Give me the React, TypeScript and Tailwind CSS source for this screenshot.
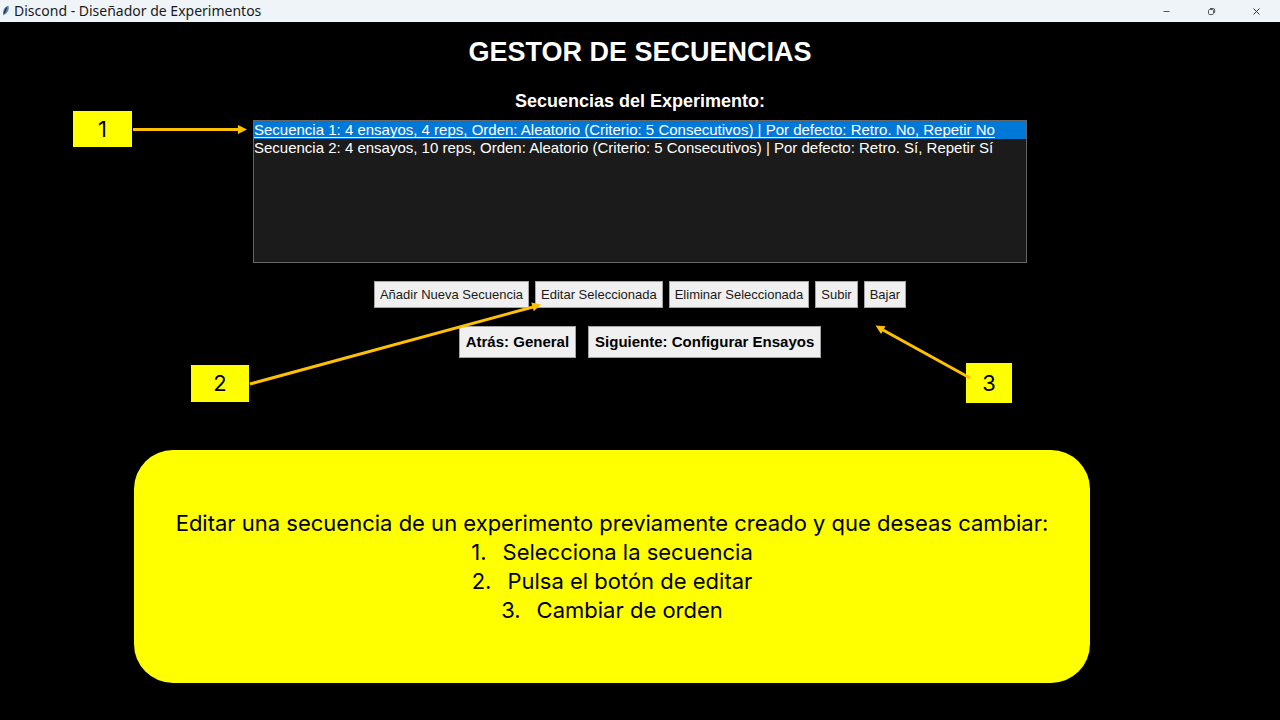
import { useState } from "react";

const sequences = [
  "Secuencia 1: 4 ensayos, 4 reps, Orden: Aleatorio (Criterio: 5 Consecutivos) | Por defecto: Retro. No, Repetir No",
  "Secuencia 2: 4 ensayos, 10 reps, Orden: Aleatorio (Criterio: 5 Consecutivos) | Por defecto: Retro. Sí, Repetir Sí",
];

const actions = [
  "Añadir Nueva Secuencia",
  "Editar Seleccionada",
  "Eliminar Seleccionada",
  "Subir",
  "Bajar",
];

const steps = ["Selecciona la secuencia", "Pulsa el botón de editar", "Cambiar de orden"];

function TitleBar() {
  return (
    <header className="flex h-[22px] items-center justify-between bg-[#eff4f9] text-[#1a1a1a]">
      <div className="flex items-center gap-1 pl-0.5">
        <svg className="h-3 w-2" viewBox="0 0 8 12" aria-hidden="true">
          <path d="M6.500.8C3.200 1.500 1 4.500 1.200 8.200L.9 10.500l1.500-1C5.500 8.500 7.500 4.800 6.500.8Z" fill="#5d86b5" />
          <path d="M4.600 2.500 2 8.500" stroke="#1c2b40" strokeWidth="1.300" fill="none" />
        </svg>
        <span className="font-['Noto_Sans',sans-serif] text-[14px] leading-[22px]">
          Discond - Diseñador de Experimentos
        </span>
      </div>
      <div className="flex h-full pr-px">
        <button type="button" aria-label="Minimizar" className="flex w-[45px] items-center justify-center">
          <svg className="h-[9px] w-[9px]" viewBox="0 0 9 9" fill="none" stroke="#555">
            <path d="M1.500 4.500h6" />
          </svg>
        </button>
        <button type="button" aria-label="Restaurar" className="flex w-[45px] items-center justify-center">
          <svg className="h-[9px] w-[9px]" viewBox="0 0 9 9" fill="none" stroke="#555">
            <rect x="1.500" y="2.500" width="5" height="5" rx="1.200" />
            <path d="M3 1.500h3.200a1.500 1.500 0 0 1 1.500 1.500v3" />
          </svg>
        </button>
        <button type="button" aria-label="Cerrar" className="flex w-[45px] items-center justify-center">
          <svg className="h-[9px] w-[9px]" viewBox="0 0 9 9" fill="none" stroke="#333">
            <path d="m1.500 1.500 6 6m0-6-6 6" />
          </svg>
        </button>
      </div>
    </header>
  );
}

function Arrows() {
  return (
    <svg
      className="pointer-events-none absolute top-0 -left-[180px] h-[400px] w-[960px]"
      viewBox="73 22 960 400"
      aria-hidden="true"
    >
      <g stroke="#ffc000" strokeWidth="3">
        <path d="M133 129.500H240" />
        <path d="M250 384 533 307" />
        <path d="M970 378 883 330" />
      </g>
      <g fill="#ffc000">
        <path d="M247 129.500 238 125v9Z" />
        <path d="M541 304.500 531.300 302.500 533.700 311.300Z" />
        <path d="M875.500 325.500 885.500 326.200 881.100 334.100Z" />
      </g>
    </svg>
  );
}

export default function App() {
  const [selected, setSelected] = useState("0");

  return (
    <div className="flex min-h-screen flex-col bg-black font-['Liberation_Sans',Arial,sans-serif]">
      <TitleBar />
      <main className="flex flex-1 flex-col items-center pb-[37px]">
        <div className="relative flex w-full max-w-[774px] flex-col items-center">
          <h1 className="pt-3 text-[27px] leading-9 font-bold text-white">GESTOR DE SECUENCIAS</h1>
          <label htmlFor="sequences" className="pt-[19px] text-[18px] leading-6 font-bold text-white">
            Secuencias del Experimento:
          </label>
          <select
            id="sequences"
            size={8}
            value={selected}
            onChange={(event) => setSelected(event.target.value)}
            className="mt-[7px] h-[143px] w-full appearance-none overflow-hidden rounded-none border border-[#666] bg-[#1b1b1b] p-0 text-[15px] text-white outline-none"
          >
            {sequences.map((text, index) => (
              <option
                key={text}
                value={String(index)}
                className="h-[18px] min-h-0 p-0 leading-[17px] underline-offset-2 [text-decoration-skip-ink:none] [-webkit-text-fill-color:#fff] checked:bg-[linear-gradient(#0078d7,#0078d7)] checked:underline"
              >
                {text}
              </option>
            ))}
          </select>
          <div className="flex flex-wrap justify-center gap-1.5 pt-[18px]">
            {actions.map((label) => (
              <button
                key={label}
                type="button"
                className="h-[27px] border border-[#a5a5a5] bg-[#f0f0f0] px-[5px] text-[13px] leading-4 text-[#1a1a1a]"
              >
                {label}
              </button>
            ))}
          </div>
          <div className="flex flex-wrap justify-center gap-3 pt-[18px]">
            {["Atrás: General", "Siguiente: Configurar Ensayos"].map((label) => (
              <button
                key={label}
                type="button"
                className="h-8 border border-[#a5a5a5] bg-[#f0f0f0] px-1.5 text-[15px] leading-5 font-bold text-black"
              >
                {label}
              </button>
            ))}
          </div>
          <div className="font-['Inter',sans-serif] text-[22px] text-black">
            <span className="absolute top-[89px] -left-[180px] flex h-9 w-[59px] items-center justify-center bg-[#ffff00]">
              1
            </span>
            <span className="absolute top-[343px] -left-[62px] flex h-[37px] w-[58px] items-center justify-center bg-[#ffff00]">
              2
            </span>
            <span className="absolute top-[341px] left-[713px] flex h-10 w-[46px] items-center justify-center bg-[#ffff00]">
              3
            </span>
          </div>
          <Arrows />
        </div>
        <section className="mt-[92px] mr-14 flex min-h-[233px] w-full max-w-[956px] flex-col items-center justify-center rounded-[39px] bg-[#ffff00] text-center font-['Inter',sans-serif] text-[22px] leading-[29px] text-black">
          <p>Editar una secuencia de un experimento previamente creado y que deseas cambiar:</p>
          <ol>
            {steps.map((step, index) => (
              <li key={step} className="flex justify-center gap-4">
                <span>{index + 1}.</span>
                <span>{step}</span>
              </li>
            ))}
          </ol>
        </section>
      </main>
    </div>
  );
}
